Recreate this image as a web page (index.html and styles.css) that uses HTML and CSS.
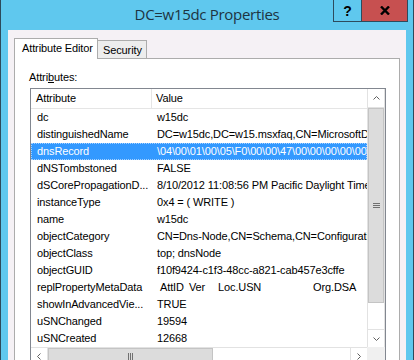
FILE: index.html
```html
<!DOCTYPE html>
<html>
<head>
<title>DC=w15dc Properties</title>
<link rel="stylesheet" href="styles.css">
</head>
<body>

	<div class="window">

		<div class="caption">
			<div class="caption-title">DC=w15dc Properties</div>
			<div class="caption-buttons">
				<div class="btn-help">?</div>
				<div class="btn-close">
					<svg width="10" height="9" viewBox="0 0 10 9"><path d="M1 0.5 L9 8.5 M9 0.5 L1 8.5" stroke="#000" stroke-width="2.4" fill="none"/></svg>
				</div>
			</div>
		</div>

		<div class="dialog">

			<div class="tabs">
				<div class="tab active">Attribute Editor</div>
				<div class="tab">Security</div>
			</div>

			<div class="tabpage">
				<div class="label">Attri<u>b</u>utes:</div>

				<div class="listbox">
					<div class="listview">
						<div class="lv-header">
							<div class="col1">Attribute</div>
							<div class="col2">Value</div>
						</div>
						<div class="lv-row"><div class="col1">dc</div><div class="col2">w15dc</div></div>
						<div class="lv-row"><div class="col1">distinguishedName</div><div class="col2">DC=w15dc,DC=w15.msxfaq,CN=MicrosoftDNS,DC=DomainDnsZones,DC=msxfaq</div></div>
						<div class="lv-row selected"><div class="col1">dnsRecord</div><div class="col2">\04\00\01\00\05\F0\00\00\47\00\00\00\00\00\00\00</div></div>
						<div class="lv-row"><div class="col1">dNSTombstoned</div><div class="col2">FALSE</div></div>
						<div class="lv-row"><div class="col1">dSCorePropagationD...</div><div class="col2">8/10/2012 11:08:56 PM Pacific Daylight Time</div></div>
						<div class="lv-row"><div class="col1">instanceType</div><div class="col2">0x4 = ( WRITE )</div></div>
						<div class="lv-row"><div class="col1">name</div><div class="col2">w15dc</div></div>
						<div class="lv-row"><div class="col1">objectCategory</div><div class="col2">CN=Dns-Node,CN=Schema,CN=Configuration,DC=msxfaq</div></div>
						<div class="lv-row"><div class="col1">objectClass</div><div class="col2">top; dnsNode</div></div>
						<div class="lv-row"><div class="col1">objectGUID</div><div class="col2">f10f9424-c1f3-48cc-a821-cab457e3cffe</div></div>
						<div class="lv-row"><div class="col1">replPropertyMetaData</div><div class="col2"><span class="m-attid">AttID</span><span class="m-ver">Ver</span><span class="m-usn">Loc.USN</span><span>Org.DSA</span></div></div>
						<div class="lv-row"><div class="col1">showInAdvancedVie...</div><div class="col2">TRUE</div></div>
						<div class="lv-row"><div class="col1">uSNChanged</div><div class="col2">19594</div></div>
						<div class="lv-row"><div class="col1">uSNCreated</div><div class="col2">12668</div></div>
					</div>

					<div class="vscroll">
						<div class="sb-arrow sb-up">
							<svg width="7" height="4" viewBox="0 0 7 4"><polyline points="0.5,3.5 3.5,0.5 6.5,3.5" stroke="#606060" fill="none"/></svg>
						</div>
						<div class="sb-thumb-v">
							<svg width="7" height="5" viewBox="0 0 7 5"><path d="M0 0.5 H7 M0 2.5 H7 M0 4.5 H7" stroke="#707070"/></svg>
						</div>
						<div class="sb-track"></div>
						<div class="sb-arrow sb-down">
							<svg width="7" height="4" viewBox="0 0 7 4"><polyline points="0.5,0.5 3.5,3.5 6.5,0.5" stroke="#606060" fill="none"/></svg>
						</div>
					</div>

					<div class="hscroll">
						<div class="sb-arrow sb-left">
							<svg width="4" height="7" viewBox="0 0 4 7"><polyline points="3.5,0.5 0.5,3.5 3.5,6.5" stroke="#606060" fill="none"/></svg>
						</div>
						<div class="sb-thumb-h">
							<svg width="5" height="7" viewBox="0 0 5 7"><path d="M0.5 0 V7 M2.5 0 V7 M4.5 0 V7" stroke="#707070"/></svg>
						</div>
						<div class="sb-track"></div>
						<div class="sb-arrow sb-right">
							<svg width="4" height="7" viewBox="0 0 4 7"><polyline points="0.5,0.5 3.5,3.5 0.5,6.5" stroke="#606060" fill="none"/></svg>
						</div>
					</div>

					<div class="sb-corner"></div>
				</div>
			</div>

		</div>
	</div>

</body>
</html>
```

FILE: styles.css
```css
body
   {
   	margin			:  0px ;
   	background		:  #5fc8ee ;
   	overflow		:  hidden ;
    }

.window
   {
   	width			:  414px ;
   	height			:  360px ;
   	box-sizing		:  border-box ;
   	border-left		:  1px solid #2c4a5b ;
   	border-right		:  1px solid #2c4a5b ;
   	overflow		:  hidden ;
   	display			:  flex ;
   	flex-direction		:  column ;
   	font-family		:  "Liberation Sans", Arial, sans-serif ;
   	font-size		:  11px ;
   	letter-spacing		:  -0.12px ;
   	color			:  #000000 ;
    }

/* title bar : title and caption buttons share one grid cell */
.caption
   {
   	height			:  30px ;
   	flex			:  none ;
   	display			:  grid ;
    }

.caption-title
   {
   	grid-area		:  1 / 1 ;
   	text-align		:  center ;
   	line-height		:  29px ;
   	font-family		:  "Open Sans", "Noto Sans", sans-serif ;
   	font-size		:  15px ;
   	letter-spacing		:  -0.3px ;
   	color			:  #1d3442 ;
    }

.caption-buttons
   {
   	grid-area		:  1 / 1 ;
   	justify-self		:  end ;
   	align-self		:  start ;
   	display			:  flex ;
   	margin-right		:  5px ;
   	border			:  1px solid #2d4b5d ;
   	border-top		:  none ;
    }

.btn-help
   {
   	width			:  27px ;
   	height			:  21px ;
   	border-right		:  1px solid #2d4b5d ;
   	display			:  flex ;
   	align-items		:  center ;
   	justify-content		:  center ;
   	font-size		:  14px ;
   	font-weight		:  bold ;
   	letter-spacing		:  0px ;
    }

.btn-close
   {
   	width			:  45px ;
   	height			:  21px ;
   	background		:  #c75050 ;
   	display			:  flex ;
   	align-items		:  center ;
   	justify-content		:  center ;
    }

.dialog
   {
   	flex			:  1 ;
   	margin			:  0px 7px ;
   	background		:  #f5f1f5 ;
   	display			:  flex ;
   	flex-direction		:  column ;
   	min-height		:  0 ;
    }

/* tabs */
.tabs
   {
   	margin			:  8px 6px 0px 6px ;
   	height			:  20px ;
   	display			:  flex ;
   	align-items		:  flex-end ;
   	border-bottom		:  1px solid #acacac ;
    }

.tab
   {
   	box-sizing		:  border-box ;
   	height			:  18px ;
   	width			:  49px ;
   	padding-left		:  5px ;
   	line-height		:  18px ;
   	background		:  #ededed ;
   	border-top		:  1px solid #acacac ;
   	border-right		:  1px solid #acacac ;
    }

.tab.active
   {
   	width			:  84px ;
   	height			:  21px ;
   	padding-left		:  7px ;
   	line-height		:  19px ;
   	margin-bottom		:  -1px ;
   	background		:  #ffffff ;
   	border-left		:  1px solid #acacac ;
    }

.tabpage
   {
   	flex			:  1 ;
   	margin			:  0px 6px ;
   	background		:  #ffffff ;
   	border-left		:  1px solid #acacac ;
   	border-right		:  1px solid #acacac ;
    }

.label
   {
   	margin			:  12px 0px 0px 14px ;
   	line-height		:  13px ;
    }

/* list box with scroll bars */
.listbox
   {
   	margin			:  4px 0px 0px 15px ;
   	width			:  356px ;
   	box-sizing		:  border-box ;
   	border			:  1px solid #828790 ;
   	display			:  grid ;
   	grid-template-columns	:  336px 18px ;
   	grid-template-rows	:  258px 17px ;
    }

.listview
   {
   	overflow		:  hidden ;
    }

.lv-header
   {
   	display			:  flex ;
   	height			:  19px ;
   	line-height		:  19px ;
   	border-bottom		:  1px solid #e5e5e5 ;
    }

.lv-header .col1
   {
   	width			:  121px ;
   	padding-left		:  5px ;
   	border-right		:  1px solid #e5e5e5 ;
    }

.lv-header .col2
   {
   	padding-left		:  4px ;
    }

.lv-row
   {
   	display			:  flex ;
   	height			:  17px ;
   	line-height		:  17px ;
    }

.col1
   {
   	flex			:  none ;
   	width			:  120px ;
   	box-sizing		:  border-box ;
   	padding-left		:  6px ;
   	white-space		:  nowrap ;
   	overflow		:  hidden ;
    }

.col2
   {
   	flex			:  1 ;
   	min-width		:  0 ;
   	padding-left		:  6px ;
   	white-space		:  nowrap ;
   	overflow		:  hidden ;
    }

.lv-row.selected
   {
   	background		:  #3399ff ;
   	color			:  #ffffff ;
   	outline			:  1px dotted #a8d2ff ;
   	outline-offset		:  -1px ;
    }

.m-attid
   {
   	display			:  inline-block ;
   	width			:  29px ;
   	padding-left		:  3px ;
    }

.m-ver
   {
   	display			:  inline-block ;
   	width			:  29px ;
    }

.m-usn
   {
   	display			:  inline-block ;
   	width			:  95px ;
    }

.vscroll
   {
   	display			:  flex ;
   	flex-direction		:  column ;
   	border-left		:  1px solid #e2e2e2 ;
   	border-right		:  1px solid #e2e2e2 ;
    }

.hscroll
   {
   	display			:  flex ;
   	border-top		:  1px solid #e2e2e2 ;
    }

.sb-arrow
   {
   	flex			:  none ;
   	display			:  flex ;
   	align-items		:  center ;
   	justify-content		:  center ;
   	background		:  #ffffff ;
    }

.sb-up
   {
   	height			:  18px ;
   	border-bottom		:  1px solid #e2e2e2 ;
    }

.sb-down
   {
   	height			:  17px ;
   	border-top		:  1px solid #e2e2e2 ;
    }

.sb-left
   {
   	width			:  16px ;
   	border-right		:  1px solid #e2e2e2 ;
    }

.sb-right
   {
   	width			:  16px ;
   	border-left		:  1px solid #e2e2e2 ;
    }

.sb-track
   {
   	flex			:  1 ;
   	background		:  #ffffff ;
    }

.sb-thumb-v
   {
   	flex			:  none ;
   	height			:  193px ;
   	background		:  #dcdcdc ;
   	border			:  1px solid #c4c4c4 ;
   	display			:  flex ;
   	align-items		:  center ;
   	justify-content		:  center ;
    }

.sb-thumb-h
   {
   	flex			:  none ;
   	width			:  163px ;
   	background		:  #dcdcdc ;
   	border			:  1px solid #c4c4c4 ;
   	display			:  flex ;
   	align-items		:  center ;
   	justify-content		:  center ;
    }

.sb-corner
   {
   	background		:  #f0f0f0 ;
    }
```
